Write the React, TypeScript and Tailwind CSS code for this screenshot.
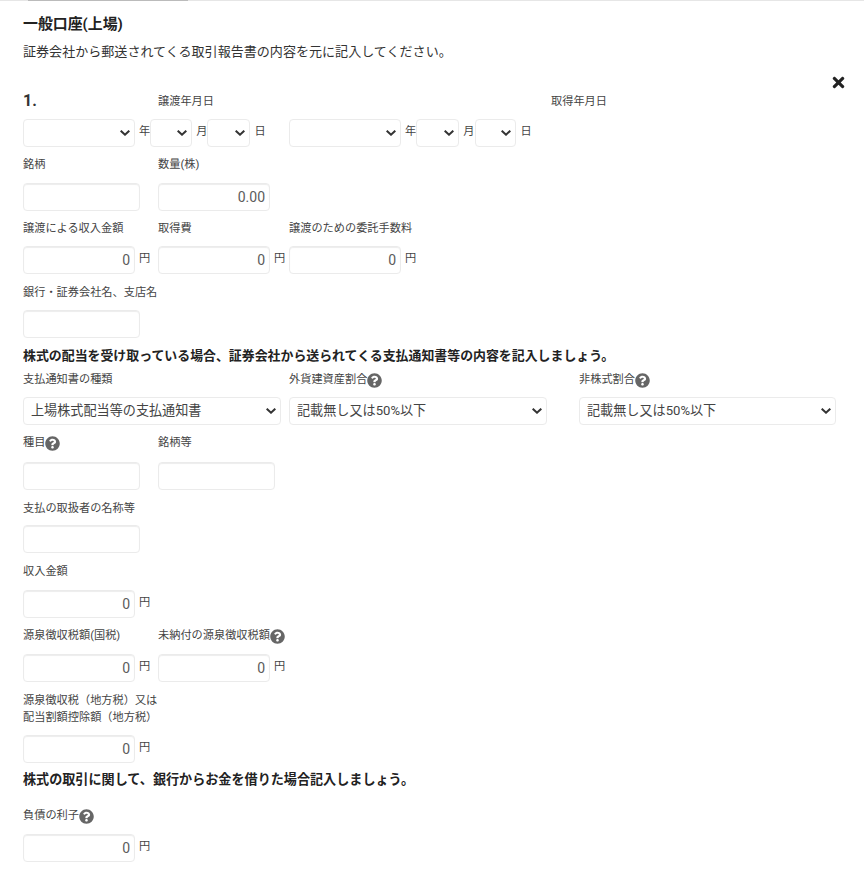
import { FaQuestionCircle, FaTimes } from "react-icons/fa";

const inputCls =
  "block h-[28px] rounded-[4px] border border-[#ebebeb] bg-white px-[4px] text-right text-[14px] text-[#5c5c5c] shadow-[inset_0_1px_1px_rgba(0,0,0,0.075)] outline-none";
const selectCls =
  "block h-[28px] w-full appearance-none rounded-[4px] border border-[#ebebeb] bg-white text-[13.12px] text-[#444] outline-none";

function Help() {
  return <FaQuestionCircle className="inline-block text-[15px] text-[#666]" />;
}

function Label({ text, help }: { text: string; help?: boolean }) {
  return (
    <div className="flex h-[19px] items-center text-[11.2px] text-[#444] whitespace-nowrap">
      {text}
      {help && <Help />}
    </div>
  );
}

function Unit({ text }: { text: string }) {
  return <span className="ml-[4px] text-[11.2px] leading-[25px] text-[#444]">{text}</span>;
}

function Select({ className, value }: { className: string; value?: string }) {
  return (
    <div className={"relative " + className}>
      <select defaultValue={value} className={selectCls + (value ? " pl-[7px]" : "")}>
        {value && <option>{value}</option>}
      </select>
      <svg
        viewBox="0 0 10 6"
        className="pointer-events-none absolute top-[11px] right-[5px] h-[6px] w-[10px] text-[#333]"
        fill="none"
        stroke="currentColor"
        strokeWidth="2"
      >
        <path d="M0.7 0.7 L5 4.7 L9.3 0.7" />
      </svg>
    </div>
  );
}

function Money() {
  return (
    <div className="flex items-start">
      <input className={inputCls + " w-[112px]"} defaultValue="0" />
      <Unit text="円" />
    </div>
  );
}

function Field({
  label,
  help,
  className,
  children,
}: {
  label: string;
  help?: boolean;
  className: string;
  children: React.ReactNode;
}) {
  return (
    <div className={className}>
      <Label text={label} help={help} />
      {children}
    </div>
  );
}

export default function App() {
  return (
    <div className="h-[874px] w-[864px] overflow-hidden bg-white font-['Roboto','Noto_Sans_CJK_JP',sans-serif] text-[#333]">
      <div className="h-px bg-[#e6e6e6]">
        <div className="ml-[28px] h-px w-[160px] bg-[#bbb]" />
      </div>
      <div className="pl-[23px]">
        <h2 className="mt-[14px] text-[14.9px] leading-[18px] font-bold text-[#222]">一般口座(上場)</h2>
        <p className="mt-[10px] text-[13.06px] leading-[18px] text-[#333]">
          証券会社から郵送されてくる取引報告書の内容を元に記入してください。
        </p>

        <div className="mt-[19px] flex h-[31px] items-start">
          <div className="w-[135px] pt-[9px] text-[16px] leading-[24px] font-bold text-[#333]">1.</div>
          <div className="w-[393px] pt-[13px]">
            <Label text="譲渡年月日" />
          </div>
          <div className="w-[279px] pt-[13px]">
            <Label text="取得年月日" />
          </div>
          <FaTimes className="-mt-[6px] text-[17px] text-[#222]" />
        </div>
        <div className="mt-[8px] flex items-start">
          <div className="flex w-[266px] items-start">
            <Select className="w-[112px]" />
            <Unit text="年" />
            <Select className="w-[42px]" />
            <Unit text="月" />
            <Select className="w-[43px]" />
            <Unit text="日" />
          </div>
          <div className="flex items-start">
            <Select className="w-[112px]" />
            <Unit text="年" />
            <Select className="w-[43px]" />
            <Unit text="月" />
            <Select className="ml-[1px] w-[41px]" />
            <Unit text="日" />
          </div>
        </div>

        <div className="mt-[9px] flex">
          <Field className="w-[135px]" label="銘柄">
            <input className={inputCls + " mt-[8px] w-[117px]"} />
          </Field>
          <Field className="w-[131px]" label="数量(株)">
            <input className={inputCls + " mt-[8px] w-[112px]"} defaultValue="0.00" />
          </Field>
        </div>

        <div className="mt-[9px] flex">
          <Field className="w-[135px]" label="譲渡による収入金額">
            <div className="mt-[7px]"><Money /></div>
          </Field>
          <Field className="w-[131px]" label="取得費">
            <div className="mt-[7px]"><Money /></div>
          </Field>
          <Field className="w-[135px]" label="譲渡のための委託手数料">
            <div className="mt-[7px]"><Money /></div>
          </Field>
        </div>

        <Field className="mt-[10px] w-[135px]" label="銀行・証券会社名、支店名">
          <input className={inputCls + " mt-[7px] w-[117px]"} />
        </Field>

        <p className="mt-[9px] text-[12.92px] leading-[18px] font-bold text-[#222]">
          株式の配当を受け取っている場合、証券会社から送られてくる支払通知書等の内容を記入しましょう。
        </p>

        <div className="mt-[6px] flex">
          <Field className="w-[266px] pr-[8px]" label="支払通知書の種類">
            <Select className="mt-[7px] w-full" value="上場株式配当等の支払通知書" />
          </Field>
          <Field className="w-[258px]" label="外貨建資産割合" help>
            <Select className="mt-[7px] w-full" value="記載無し又は50%以下" />
          </Field>
          <Field className="ml-[32px] w-[257px]" label="非株式割合" help>
            <Select className="mt-[7px] w-full" value="記載無し又は50%以下" />
          </Field>
        </div>

        <div className="mt-[9px] flex">
          <Field className="w-[135px]" label="種目" help>
            <input className={inputCls + " mt-[9px] w-[117px]"} />
          </Field>
          <Field className="w-[131px]" label="銘柄等">
            <input className={inputCls + " mt-[9px] w-[117px]"} />
          </Field>
        </div>

        <Field className="mt-[10px] w-[135px]" label="支払の取扱者の名称等">
          <input className={inputCls + " mt-[6px] w-[117px]"} />
        </Field>

        <Field className="mt-[10px] w-[135px]" label="収入金額">
          <div className="mt-[8px]"><Money /></div>
        </Field>

        <div className="mt-[9px] flex">
          <Field className="w-[135px]" label="源泉徴収税額(国税)">
            <div className="mt-[8px]"><Money /></div>
          </Field>
          <Field className="w-[131px]" label="未納付の源泉徴収税額" help>
            <div className="mt-[8px]"><Money /></div>
          </Field>
        </div>

        <div className="mt-[10px] text-[11.2px] leading-[17px] text-[#444]">
          源泉徴収税（地方税）又は
          <br />
          配当割額控除額（地方税）
        </div>
        <div className="mt-[9px]"><Money /></div>

        <p className="mt-[8px] text-[13.1px] leading-[18px] font-bold text-[#222]">
          株式の取引に関して、銀行からお金を借りた場合記入しましょう。
        </p>

        <Field className="mt-[18px] w-[135px]" label="負債の利子" help>
          <div className="mt-[8px]"><Money /></div>
        </Field>
      </div>
    </div>
  );
}
